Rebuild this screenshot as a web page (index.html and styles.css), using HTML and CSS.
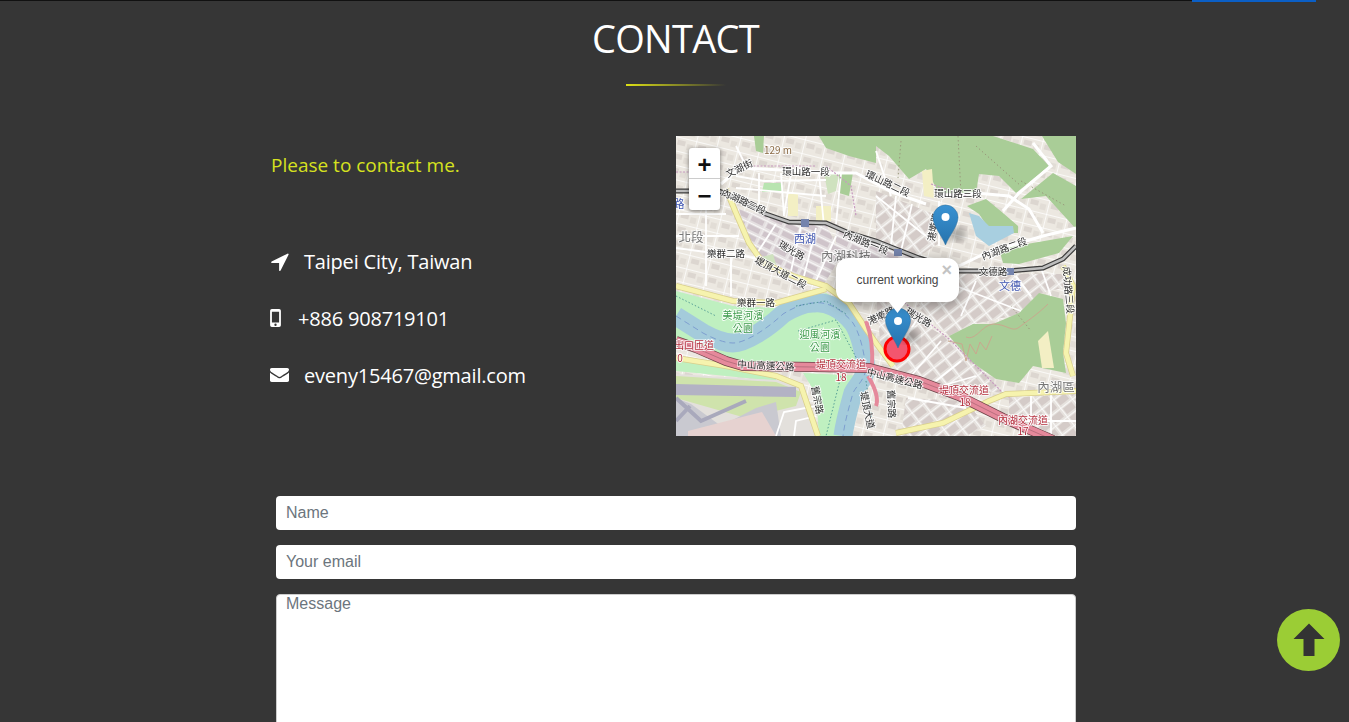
FILE: index.html
```html
<!DOCTYPE html>
<html lang="en">
<head>
    <meta charset="UTF-8">
    <meta name="viewport" content="width=device-width, initial-scale=1.0">
    <title>Contact</title>
    <link rel="stylesheet" href="styles.css">
</head>
<body>
    <div class="top-bar"><span class="top-bar-active"></span></div>

    <section class="contact">
        <h1 class="contact-title">CONTACT</h1>
        <div class="title-line"></div>

        <div class="contact-columns">
            <div class="contact-info">
                <p class="contact-lead">Please to contact me.</p>
                <ul class="contact-list">
                    <li class="contact-item">
                        <svg class="icon icon-arrow" viewBox="128 128 1472 1536"><path d="M1593 349l-640 1280q-17 35-57 35-5 0-15-2-22-5-35.5-22.5t-13.5-39.5v-576h-576q-22 0-39.5-13.5t-22.5-35.5 4-42 29-30l1280-640q13-7 29-7 27 0 45 19 15 14 18.5 34.5t-6.5 39.5z"/></svg>
                        <span>Taipei City, Taiwan</span>
                    </li>
                    <li class="contact-item">
                        <svg class="icon icon-mobile" viewBox="0 0 12 20"><path fill-rule="evenodd" d="M2 0h8a2 2 0 0 1 2 2v16a2 2 0 0 1-2 2H2a2 2 0 0 1-2-2V2a2 2 0 0 1 2-2zm0 3v12h8V3zm4 13.200a1.300 1.300 0 1 0 0 2.600 1.300 1.300 0 0 0 0-2.600z"/></svg>
                        <span>+886 908719101</span>
                    </li>
                    <li class="contact-item">
                        <svg class="icon icon-mail" viewBox="0 256 1792 1408" preserveAspectRatio="none"><path d="M1792 710v794q0 66-47 113t-113 47h-1472q-66 0-113-47t-47-113v-794q44 49 101 87 362 246 497 345 57 42 92.500 65.500t94.500 48 110 24.500h2q51 0 110-24.500t94.500-48 92.500-65.500q170-123 498-345 57-39 100-87zm0-294q0 79-49 151t-122 123q-376 261-468 325-10 7-42.500 30.500t-54 38-52 32.500-57.500 27-50 9h-2q-23 0-50-9t-57.500-27-52-32.500-54-38-42.500-30.500q-91-64-262-182.500t-205-142.500q-62-42-117-115.500t-55-136.500q0-78 41.500-130t118.500-52h1472q65 0 112.500 47t47.500 113z"/></svg>
                        <span>eveny15467@gmail.com</span>
                    </li>
                </ul>
            </div>

            <div class="map">
                <svg class="map-canvas" viewBox="0 0 400 300">
                    <defs>
                        <pattern id="blocksBase" width="21" height="14" patternUnits="userSpaceOnUse" patternTransform="rotate(14)">
                            <rect width="21" height="14" fill="#ece8e1"/>
                            <rect x="3" y="3" width="8" height="5" fill="#dcd6d0"/>
                            <rect x="13" y="5" width="6" height="6" fill="#e2ddd6"/>
                            <path d="M0 0h21M0 0v14" stroke="#fff" stroke-width="1.500"/>
                        </pattern>
                        <pattern id="blocksPurple" width="17" height="9" patternUnits="userSpaceOnUse" patternTransform="rotate(26)">
                            <rect width="17" height="9" fill="#e4dfe0"/>
                            <rect x="2" y="2" width="13" height="5" fill="#cfc4ca"/>
                            <path d="M0 0h17" stroke="#fff" stroke-width="1.500"/>
                            <path d="M0 0v9" stroke="#fff" stroke-width="0.700"/>
                        </pattern>
                        <pattern id="blocksEast" width="15" height="11" patternUnits="userSpaceOnUse" patternTransform="rotate(-38)">
                            <rect width="15" height="11" fill="#e6e2de"/>
                            <rect x="2" y="2" width="11" height="7" fill="#d4cbc8"/>
                            <path d="M0 0h15M0 0v11" stroke="#fff" stroke-width="1.500"/>
                        </pattern>
                        <filter id="soft"><feGaussianBlur stdDeviation="0.400"/></filter>
                        <filter id="shadow"><feGaussianBlur stdDeviation="3"/></filter>
                        <linearGradient id="pin" x1="0" y1="0" x2="0" y2="1">
                            <stop offset="0" stop-color="#3a92d2"/>
                            <stop offset="1" stop-color="#2673ad"/>
                        </linearGradient>
                        <path id="metroPath" d="M0 55L43 55 67 65 90 78 113 86 150 87 173 97 200 105 220 113 243 122 283 135 333 135 367 132 387 123 400 110"/>
                        <path id="freewayPath" d="M0 205L20 212 50 225 67 230 137 231 193 232 243 245 283 260 327 282 377 304"/>
                        <path id="riverPath" d="M0 180L27 197C40 204 50 207 57 207 70 207 92 192 107 178 120 170 130 167 137 167 150 165 165 172 177 187 184 198 188 215 190 233 188 245 180 250 177 257 172 275 169 285 167 300"/>
                        <path id="yellowA" d="M50 53L60 77 73 107 87 127 117 140 150 150 173 167 190 193 200 207 217 230"/>
                        <path id="yellowB" d="M0 150L57 165 100 167 150 153"/>
                        <path id="yellowC" d="M220 297L267 287 313 265 330 258 400 255"/>
                        <path id="yellowD" d="M387 130L397 150 393 190 390 217 397 240"/>
                        <path id="yellowE" d="M0 222L50 230 100 240 125 250 142 300"/>
                    </defs>

                    <g filter="url(#soft)">
                        <rect width="400" height="300" fill="url(#blocksBase)"/>
                        <path fill="url(#blocksPurple)" d="M63 73L90 80 113 88 150 88 165 120 147 150 117 140 87 125 73 107z"/>
                        <path fill="url(#blocksPurple)" d="M160 90L200 105 243 122 240 132 160 125z"/>
                        <path fill="url(#blocksEast)" d="M200 160L273 203 300 227 327 257 267 250 225 238 205 215z"/>
                        <path fill="url(#blocksEast)" d="M200 55L255 77 262 108 243 120 200 103z"/>
                        <path fill="url(#blocksEast)" d="M333 262L400 258V300H380L333 278z"/>
                        <path fill="url(#blocksEast)" d="M230 262L290 265 310 290 290 300H225z"/>
                        <path fill="url(#blocksEast)" d="M283 138H385L395 150 365 157 345 178 297 188 273 200 240 170z"/>

                        <!-- forest -->
                        <path class="forest" d="M200 0L317 0 357 13 373 30 340 57 323 40 303 38 300 57 263 57 250 33 233 43 213 20 200 10z"/>
                        <path class="forest" d="M143 0H200V27L173 20 150 12z"/>
                        <path class="forest" d="M345 63L377 37 400 50V93L370 60z"/>
                        <path class="forest" d="M366 0H400V38L382 26z"/>
                        <path class="forest" d="M273 200L297 188 317 188 343 177 363 157 387 163 390 187 387 217 390 237 357 230 343 247 320 243 297 227z"/>
                        <path class="forest" d="M323 113L397 100 383 117 343 128 327 127z"/>
                        <path class="forest" d="M291 70L310 63 327 77 342 90V97H316L303 78z"/>
                        <path class="forest" d="M163 37L177 37 173 60 163 57z"/>
                        <path class="forest" d="M78 0H88L87 17 80 15z"/>
                        <path class="trail" d="M290 201C300 205 305 190 317 188 330 188 336 196 342 192 350 186 362 178 372 168M272 205L286 208 290 225 294 208 300 218 304 206 310 214 316 200"/>
                        <path class="trail-dot" d="M282 0L285 58M225 5L222 42M300 10L345 50M345 45L390 70M335 170L355 195"/>

                        <!-- small parks and fields -->
                        <path class="lawn" d="M88 47H105L107 56H86z"/>
                        <path class="forest-light" d="M82 122L97 118 100 128 92 134z"/>
                        <path class="forest-light" d="M148 38L163 37 160 55 152 58z"/>
                        <path class="sand" d="M112 58H122V80H112z"/>
                        <path class="sand" d="M140 70H155V85H140z"/>
                        <path class="sand" d="M362 205L372 195 378 232 366 232z"/>
                        <path class="sand" d="M246 35L256 33 258 62 248 60z"/>

                        <!-- river parks -->
                        <path class="park" d="M0 155L57 170 100 172 150 157 172 168 190 195 195 232 67 230 0 205z"/>
                        <path class="park" d="M127 237L190 240 165 300H143L140 258z"/>
                        <path class="park" d="M0 222L100 240V245L0 235z"/>

                        <!-- airport -->
                        <path class="airport" d="M0 238L100 244 128 252 142 300H0z"/>
                        <path class="grass" d="M0 240L100 246 125 256 120 270 70 282 0 262z"/>
                        <path class="runway" d="M0 248L120 251V261L0 259z"/>
                        <path class="apron" d="M0 300V262L15 268 45 290 80 272 100 266 105 300z"/>
                        <path class="apron-pink" d="M12 295L70 280 86 276 100 300H12z"/>
                        <path class="taxi" d="M0 262L25 285 70 265M0 285L14 270"/>
                        <path class="road-white-thin" d="M100 300L108 276 140 270M118 300L120 285 140 280"/>

                        <!-- river and lake -->
                        <use href="#riverPath" class="river"/>
                        <use href="#riverPath" class="river-dash"/>
                        <path class="water" d="M293 77L303 80 313 90 337 90 338 97 313 110 300 100z"/>
                        <path class="park-dash" d="M0 160L40 180M120 170L150 165 170 178M122 195L160 184 182 225M165 240L150 300M190 245L197 290"/>

                        <!-- streets -->
                        <path class="road-white" d="M145 37L180 37 216 56 250 68M263 60L300 57 333 60 353 73 367 97M357 7L375 30 343 57 327 75M283 130L310 117 367 100 400 92M45 48L64 32 130 35 145 37"/>
                        <path class="road-white-thin" d="M0 112L30 116 60 118 85 124M70 30L60 10M108 78L115 38"/>
                        <path class="road-white-thin" d="M0 78H50M0 100H63M30 60V150M55 120V160M83 37V78M105 37L108 80M143 38L148 90M165 38L160 88M60 40L88 45 150 44M60 52L150 60M200 15L215 60M200 60L250 100M220 60L215 110M236 68L225 115M100 88L78 122M125 90L115 135M140 92L128 140M160 100L140 145M263 65V110M240 185L215 225M265 205L235 240M285 225L260 245M300 240L265 250M232 262L290 272M330 285H400M355 258V290M375 258V300M280 150L345 175M300 145L285 180M340 140L355 160M365 132L375 160"/>
                        <path class="footway" d="M220 160L273 203 327 257 335 262M150 30L175 50 180 80M255 48L290 60M0 36H40M60 30L140 30"/>

                        <!-- main roads -->
                        <use href="#yellowB" class="road-casing"/>
                        <use href="#yellowC" class="road-casing"/>
                        <use href="#yellowD" class="road-casing"/>
                        <use href="#yellowE" class="road-casing"/>
                        <use href="#yellowA" class="road-casing"/>
                        <use href="#yellowB" class="road-yellow"/>
                        <use href="#yellowC" class="road-yellow"/>
                        <use href="#yellowD" class="road-yellow"/>
                        <use href="#yellowE" class="road-yellow"/>
                        <use href="#yellowA" class="road-yellow"/>

                        <!-- metro -->
                        <use href="#metroPath" class="metro"/>
                        <use href="#metroPath" class="metro-line"/>
                        <rect class="station" x="125" y="83" width="8" height="8"/>
                        <rect class="station" x="218" y="113" width="8" height="7"/>
                        <rect class="station" x="330" y="132" width="8" height="7"/>

                        <!-- freeway -->
                        <path class="freeway-ramp" d="M190 185C196 200 197 215 196 232M192 240C198 250 203 262 200 270M172 232H206"/>
                        <use href="#freewayPath" class="freeway"/>
                        <use href="#freewayPath" class="freeway-fill"/>
                        <use href="#freewayPath" class="freeway-line"/>

                        <!-- labels -->
                        <g class="labels">
                            <text class="l-peak" x="102" y="18" text-anchor="middle">129 m</text>
                            <text x="63" y="36" transform="rotate(-25 63 32)" text-anchor="middle">文湖街</text>
                            <text x="130" y="39" text-anchor="middle">環山路一段</text>
                            <text x="212" y="51" transform="rotate(25 212 47)" text-anchor="middle">環山路二段</text>
                            <text x="282" y="61" text-anchor="middle">環山路三段</text>
                            <text x="68" y="69" transform="rotate(25 68 65)" text-anchor="middle">內湖路三段</text>
                            <text class="l-metro" x="3" y="72" text-anchor="middle">路</text>
                            <text class="l-metro" x="129" y="107" text-anchor="middle">西湖</text>
                            <text x="116" y="118" transform="rotate(30 116 114)" text-anchor="middle">瑞光路</text>
                            <text x="190" y="110" transform="rotate(22 190 106)" text-anchor="middle">內湖路一段</text>
                            <text class="l-big" x="170" y="125" text-anchor="middle">內湖科技</text>
                            <text class="l-big" x="15" y="106" text-anchor="middle">北段</text>
                            <text x="50" y="121" text-anchor="middle">樂群二路</text>
                            <text x="105" y="140" transform="rotate(28 105 136)" text-anchor="middle">堤頂大道二段</text>
                            <text x="80" y="170" text-anchor="middle">樂群一路</text>
                            <text class="l-park" x="67" y="183" text-anchor="middle">美堤河濱</text>
                            <text class="l-park" x="67" y="196" text-anchor="middle">公園</text>
                            <text class="l-park" x="144" y="202" text-anchor="middle">迎風河濱</text>
                            <text class="l-park" x="144" y="215" text-anchor="middle">公園</text>
                            <text class="l-red" x="18" y="213" text-anchor="middle">出口匝道</text>
                            <text class="l-red" x="4" y="226" text-anchor="middle">0</text>
                            <text x="90" y="233" transform="rotate(3 90 229)" text-anchor="middle">中山高速公路</text>
                            <text class="l-red" x="165" y="232" text-anchor="middle">堤頂交流道</text>
                            <text class="l-red" x="165" y="245" text-anchor="middle">18</text>
                            <text x="219" y="246" transform="rotate(14 219 242)" text-anchor="middle">中山高速公路</text>
                            <text class="l-red" x="288" y="258" text-anchor="middle">堤頂交流道</text>
                            <text class="l-red" x="289" y="270" text-anchor="middle">18</text>
                            <text class="l-red" x="347" y="288" text-anchor="middle">內湖交流道</text>
                            <text class="l-red" x="347" y="299" text-anchor="middle">17</text>
                            <text class="l-big" x="380" y="256" text-anchor="middle">內湖區</text>
                            <text class="l-metro" x="334" y="154" text-anchor="middle">文德</text>
                            <text x="317" y="139" text-anchor="middle">文德路</text>
                            <text x="328" y="116" transform="rotate(-20 328 112)" text-anchor="middle">內湖路二段</text>
                            <text x="393" y="158" transform="rotate(85 393 154)" text-anchor="middle">成功路三段</text>
                            <text x="257" y="95" transform="rotate(-80 257 91)" text-anchor="middle">港墘路</text>
                            <text x="205" y="183" transform="rotate(-25 205 179)" text-anchor="middle">港墘路</text>
                            <text x="243" y="185" transform="rotate(30 243 181)" text-anchor="middle">瑞光路</text>
                            <text x="192" y="278" transform="rotate(78 192 274)" text-anchor="middle">堤頂大道</text>
                            <text x="142" y="268" transform="rotate(80 142 264)" text-anchor="middle">舊宗路</text>
                            <text x="216" y="272" transform="rotate(88 216 268)" text-anchor="middle">舊宗路</text>
                        </g>
                    </g>

                    <!-- current position -->
                    <circle class="position" cx="221" cy="213" r="12"/>

                    <!-- markers -->
                    <ellipse class="pin-shadow" cx="281" cy="98" rx="9" ry="7"/>
                    <path class="pin" d="M269.500 109C266 100 257 90 257 81.500A12.500 12.500 0 0 1 282 81.500C282 90 273 100 269.500 109z"/>
                    <circle class="pin-dot" cx="269.500" cy="81" r="4"/>
                    <ellipse class="pin-shadow" cx="234" cy="200" rx="9" ry="7"/>
                    <path class="pin" d="M222 212C218.500 203 209.500 193 209.500 184.500A12.500 12.500 0 0 1 234.500 184.500C234.500 193 225.500 203 222 212z"/>
                    <circle class="pin-dot" cx="222" cy="185" r="4"/>
                </svg>

                <div class="zoom-control">
                    <span class="zoom-btn zoom-btn-in">+</span>
                    <span class="zoom-btn">&minus;</span>
                </div>

                <div class="popup">
                    <span class="popup-close">&times;</span>
                    <p class="popup-text">current working</p>
                    <span class="popup-tip"></span>
                </div>
            </div>
        </div>

        <form class="contact-form">
            <input class="form-input" type="text" placeholder="Name">
            <input class="form-input" type="text" placeholder="Your email">
            <textarea class="form-input form-message" placeholder="Message"></textarea>
        </form>
    </section>

    <a class="to-top" href="#">
        <svg viewBox="0 0 32 34"><path d="M16 0.500L31.500 16H21.500V33H10.500V16H0.500z" stroke-linejoin="round"/></svg>
    </a>
</body>
</html>
```

FILE: styles.css
```css
html, body {
    height: 100%;
    overflow: hidden;
}

body {
    margin: 0;
    padding: 0;
    background: #363636;
    color: #fff;
    font-family: "Open Sans", "Noto Sans", sans-serif;
}

.top-bar {
    display: flex;
    justify-content: flex-end;
    width: 1316px;
    height: 2px;
    background: linear-gradient(#111 0, #111 1px, #363636 1px);
}

.top-bar-active {
    width: 124px;
    height: 2px;
    background: #0b5fc6;
}

.contact {
    width: 806px;
    margin-left: 270px;
}

.contact-title {
    margin: 14px 0 0;
    padding-left: 5px;
    font-size: 38px;
    font-weight: 400;
    line-height: 44px;
    text-align: center;
    letter-spacing: -0.7px;
}

.title-line {
    width: 100px;
    height: 2px;
    margin: 24px 0 0 356px;
    background: linear-gradient(to right, #dde015, rgba(221, 224, 21, 0));
}

.contact-columns {
    display: grid;
    grid-template-columns: 406px 400px;
    margin-top: 50px;
}

.contact-lead {
    margin: 15px 0 0 1px;
    font-size: 19px;
    line-height: 28px;
    color: #d6e21f;
}

.contact-list {
    list-style: none;
    margin: 67px 0 0;
    padding: 0;
}

.contact-item {
    display: flex;
    align-items: center;
    height: 30px;
    margin-bottom: 27px;
    font-size: 20px;
    letter-spacing: -0.2px;
}

.icon {
    fill: #fff;
    flex: none;
}

.icon-arrow {
    width: 19px;
    height: 19px;
    margin-right: 15px;
}

.icon-mobile {
    width: 11px;
    height: 18px;
    margin-right: 17px;
}

.icon-mail {
    width: 19px;
    height: 14px;
    margin-right: 15px;
}

.map {
    position: relative;
    width: 400px;
    height: 300px;
    overflow: hidden;
}

.map-canvas {
    display: block;
    width: 400px;
    height: 300px;
}

.forest { fill: #a9cd97; }
.forest-light { fill: #cfe2bf; }
.lawn { fill: #b8e4b0; }
.sand { fill: #f3efc4; }
.park { fill: #bff0c0; }
.airport { fill: #e3e0dc; }
.grass { fill: #cfe3ac; }
.runway { fill: #b3b2c4; }
.apron { fill: #c9c9d0; }
.apron-pink { fill: #e6d2d0; }
.taxi { fill: none; stroke: #a9a9bc; stroke-width: 4; }
.trail { fill: none; stroke: #c9a88e; stroke-width: 1; }
.trail-dot { fill: none; stroke: #9a9a7c; stroke-width: 1; stroke-dasharray: 1.500 2.500; }
.river { fill: none; stroke: #a4cbdb; stroke-width: 19; }
.river-dash { fill: none; stroke: #7e9fd0; stroke-width: 1; stroke-dasharray: 6 4; }
.park-dash { fill: none; stroke: #3c8a8a; stroke-width: 0.800; stroke-dasharray: 1.500 2; }
.water { fill: #a8cfe0; }
.road-casing { fill: none; stroke: #d9cf8c; stroke-width: 6; }
.road-yellow { fill: none; stroke: #f6f3ae; stroke-width: 4.500; }
.road-white { fill: none; stroke: #fff; stroke-width: 3; }
.road-white-thin { fill: none; stroke: #fff; stroke-width: 1.800; }
.footway { fill: none; stroke: #c79ac0; stroke-width: 1.200; stroke-dasharray: 2 1.500; }
.metro { fill: none; stroke: #3c3c3c; stroke-width: 5; }
.metro-line { fill: none; stroke: #bdbdbd; stroke-width: 2.500; }
.station { fill: #7584ad; }
.freeway { fill: none; stroke: #6e4248; stroke-width: 10; }
.freeway-fill { fill: none; stroke: #e5899b; stroke-width: 8.500; }
.freeway-line { fill: none; stroke: #8c5560; stroke-width: 0.500; }
.freeway-ramp { fill: none; stroke: #e5899b; stroke-width: 4; }

.labels text {
    font-family: "Noto Sans CJK TC", "Liberation Sans", sans-serif;
    font-size: 9.500px;
    fill: #2b2b2b;
    paint-order: stroke;
    stroke: rgba(255, 255, 255, 0.85);
    stroke-width: 1.800px;
}

.labels .l-peak { fill: #8a6a45; font-size: 10px; }
.labels .l-metro { fill: #3f55b0; font-size: 11px; }
.labels .l-big { fill: #777; font-size: 12.500px; }
.labels .l-park { fill: #3e9a4c; font-size: 10px; letter-spacing: 0.200px; }
.labels .l-red { fill: #b5303f; font-size: 10px; }

.position {
    fill: #f3566e;
    stroke: #f00;
    stroke-width: 3;
}

.pin { fill: url(#pin); stroke: #2a6f9f; stroke-width: 0.500; }
.pin-dot { fill: #fff; }
.pin-shadow { fill: rgba(0, 0, 0, 0.28); filter: url(#shadow); }

.zoom-control {
    position: absolute;
    top: 12px;
    left: 13px;
    display: flex;
    flex-direction: column;
    width: 31px;
    border-radius: 3px;
    background: #fff;
    box-shadow: 0 1px 4px rgba(0, 0, 0, 0.5);
}

.zoom-btn {
    height: 31px;
    font-family: "Liberation Sans", sans-serif;
    font-size: 24px;
    font-weight: 700;
    line-height: 33px;
    text-align: center;
    color: #111;
}

.zoom-btn-in {
    box-shadow: inset 0 -1px 0 #ccc;
}

.popup {
    position: absolute;
    top: 122px;
    left: 160px;
    width: 123px;
    height: 44px;
    border-radius: 12px;
    background: #fff;
    box-shadow: 0 3px 14px rgba(0, 0, 0, 0.4);
}

.popup-text {
    margin: 0;
    font-family: "Liberation Sans", sans-serif;
    font-size: 12px;
    line-height: 44px;
    text-align: center;
    color: #444;
}

.popup-close {
    position: absolute;
    top: 3px;
    right: 7px;
    font-family: "Liberation Sans", sans-serif;
    font-size: 18px;
    font-weight: 700;
    line-height: 18px;
    color: #c3c3c3;
}

.popup-tip {
    position: absolute;
    top: 38px;
    left: 53px;
    width: 17px;
    height: 17px;
    background: #fff;
    clip-path: polygon(0 35%, 100% 35%, 50% 100%);
}

.contact-form {
    display: flex;
    flex-direction: column;
    gap: 15px;
    margin: 60px 0 0 6px;
}

.form-input {
    box-sizing: border-box;
    width: 800px;
    height: 34px;
    padding: 0 10px;
    border: none;
    border-radius: 4px;
    background: #fff;
    font-family: "Liberation Sans", sans-serif;
    font-size: 16px;
    color: #333;
}

.form-input::placeholder {
    color: #6c757d;
    opacity: 1;
}

.form-message {
    height: 160px;
    padding: 0 9px;
    border: 1px solid #ccc;
    resize: none;
    line-height: 18px;
}

.to-top {
    position: fixed;
    right: 9px;
    bottom: 51px;
    display: flex;
    align-items: center;
    justify-content: center;
    width: 63px;
    height: 62px;
    border-radius: 50%;
    background: #9bcd35;
}

.to-top svg {
    width: 32px;
    height: 34px;
    fill: #333;
}
```
